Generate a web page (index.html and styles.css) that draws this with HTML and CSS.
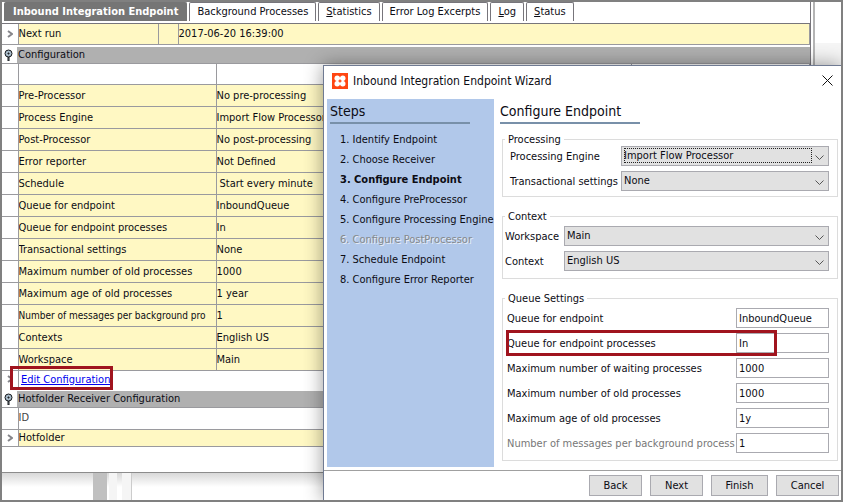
FILE: index.html
```html
<!DOCTYPE html>
<html lang="en">
<head>
<meta charset="utf-8">
<title>Inbound Integration Endpoint</title>
<link rel="stylesheet" href="styles.css">
</head>
<body>
<div class="app">
  <main class="main">
    <div class="tabs" role="tablist">
      <button class="tab tab-active" role="tab">Inbound Integration Endpoint</button>
      <button class="tab" role="tab">Background Processes</button>
      <button class="tab" role="tab"><u>S</u>tatistics</button>
      <button class="tab" role="tab">Error Log Excerpts</button>
      <button class="tab" role="tab"><u>L</u>og</button>
      <button class="tab" role="tab"><u>S</u>tatus</button>
    </div>
    <table class="grid next-run">
      <colgroup><col class="c-gutter"><col class="c-name"><col class="c-gap"><col></colgroup>
      <tr><td class="gutter"><svg class="chev" viewBox="0 0 6 8"><path d="M1 1l4 3-4 3"/></svg></td><td>Next run</td><td></td><td>2017-06-20 16:39:00</td></tr>
    </table>
    <h2 class="section"><svg class="pin" viewBox="0 0 9 12"><path d="M4 8v4h1V8z"/><circle cx="4.500" cy="4.500" r="3.500"/><path d="M4 4h1v1H4z"/></svg><span>Configuration</span></h2>
    <table class="grid config">
      <colgroup><col class="c-gutter"><col class="c-label"><col class="c-value"><col></colgroup>
      <tr class="blank"><td class="gutter"></td><td></td><td></td><td></td></tr>
      <tr><td class="gutter"></td><td>Pre-Processor</td><td>No pre-processing</td><td></td></tr>
      <tr><td class="gutter"></td><td>Process Engine</td><td>Import Flow Processor</td><td></td></tr>
      <tr><td class="gutter"></td><td>Post-Processor</td><td>No post-processing</td><td></td></tr>
      <tr><td class="gutter"></td><td>Error reporter</td><td>Not Defined</td><td></td></tr>
      <tr><td class="gutter"></td><td>Schedule</td><td class="inset">Start every minute</td><td></td></tr>
      <tr><td class="gutter"></td><td>Queue for endpoint</td><td>InboundQueue</td><td></td></tr>
      <tr><td class="gutter"></td><td>Queue for endpoint processes</td><td>In</td><td></td></tr>
      <tr><td class="gutter"></td><td>Transactional settings</td><td>None</td><td></td></tr>
      <tr><td class="gutter"></td><td>Maximum number of old processes</td><td>1000</td><td></td></tr>
      <tr><td class="gutter"></td><td>Maximum age of old processes</td><td>1 year</td><td></td></tr>
      <tr><td class="gutter"></td><td class="tight">Number of messages per background pro</td><td>1</td><td></td></tr>
      <tr><td class="gutter"></td><td>Contexts</td><td>English US</td><td></td></tr>
      <tr><td class="gutter"></td><td>Workspace</td><td>Main</td><td></td></tr>
    </table>
    <div class="edit-row">
      <span class="edit-gutter"><svg class="chev" viewBox="0 0 6 8"><path d="M1 1l4 3-4 3"/></svg></span>
      <a class="edit-link" href="#">Edit Configuration</a>
      <span class="mark mark-edit"></span>
    </div>
    <h2 class="section section-low"><svg class="pin" viewBox="0 0 9 12"><path d="M4 8v4h1V8z"/><circle cx="4.500" cy="4.500" r="3.500"/><path d="M4 4h1v1H4z"/></svg><span>Hotfolder Receiver Configuration</span></h2>
    <table class="grid hotfolder">
      <colgroup><col class="c-gutter"><col></colgroup>
      <tr class="blank"><td class="gutter"></td><td>ID</td></tr>
      <tr class="short"><td class="gutter"><svg class="chev" viewBox="0 0 6 8"><path d="M1 1l4 3-4 3"/></svg></td><td>Hotfolder</td></tr>
    </table>
    <div class="footer-space"></div>
    <div class="behind"><i class="behind-bar"></i><i class="behind-strip"></i><i class="behind-strip behind-edge"></i></div>
  </main>
  <aside class="side"></aside>
</div>

<section class="dialog" role="dialog" aria-labelledby="wizard-title">
  <header class="titlebar">
    <svg class="logo" viewBox="0 0 16 16"><rect width="16" height="16" fill="#ff4612"/><g fill="#fff"><circle cx="5.200" cy="5.200" r="2.700"/><circle cx="10.800" cy="5.200" r="2.700"/><circle cx="5.200" cy="10.800" r="2.700"/><circle cx="10.800" cy="10.800" r="2.700"/><path d="M5 4.500h6v1.500H5zM5 10h6v1.500H5zM4.500 5H6v6H4.500zM10 5h1.500v6H10z"/></g></svg>
    <h1 id="wizard-title">Inbound Integration Endpoint Wizard</h1>
    <button class="close" aria-label="Close"><svg viewBox="0 0 11 11"><path d="M.5.5l10 10M10.500.5l-10 10"/></svg></button>
  </header>
  <div class="dialog-body">
    <nav class="steps">
      <h2 class="heading">Steps</h2>
      <ol>
        <li>1. Identify Endpoint</li>
        <li>2. Choose Receiver</li>
        <li class="current">3. Configure Endpoint</li>
        <li>4. Configure PreProcessor</li>
        <li>5. Configure Processing Engine</li>
        <li class="off">6. Configure PostProcessor</li>
        <li>7. Schedule Endpoint</li>
        <li>8. Configure Error Reporter</li>
      </ol>
    </nav>
    <form class="content">
      <h2 class="heading">Configure Endpoint</h2>
      <fieldset class="group processing">
        <legend>Processing</legend>
        <div class="row">
          <label for="engine">Processing Engine</label>
          <span class="pick focused"><select id="engine"><option>Import Flow Processor</option></select><svg viewBox="0 0 9 5"><path d="M.5.5l4 4 4-4"/></svg></span>
        </div>
        <div class="row">
          <label for="trans">Transactional settings</label>
          <span class="pick"><select id="trans"><option>None</option></select><svg viewBox="0 0 9 5"><path d="M.5.5l4 4 4-4"/></svg></span>
        </div>
      </fieldset>
      <fieldset class="group context">
        <legend>Context</legend>
        <div class="row">
          <label for="workspace">Workspace</label>
          <span class="pick"><select id="workspace"><option>Main</option></select><svg viewBox="0 0 9 5"><path d="M.5.5l4 4 4-4"/></svg></span>
        </div>
        <div class="row">
          <label for="context">Context</label>
          <span class="pick"><select id="context"><option>English US</option></select><svg viewBox="0 0 9 5"><path d="M.5.5l4 4 4-4"/></svg></span>
        </div>
      </fieldset>
      <fieldset class="group queue">
        <legend>Queue Settings</legend>
        <div class="row"><label for="q1">Queue for endpoint</label><input id="q1" type="text" value="InboundQueue"></div>
        <div class="row marked"><label for="q2">Queue for endpoint processes</label><input id="q2" type="text" value="In"><span class="mark mark-queue"></span></div>
        <div class="row"><label for="q3">Maximum number of waiting processes</label><input id="q3" type="text" value="1000"></div>
        <div class="row"><label for="q4">Maximum number of old processes</label><input id="q4" type="text" value="1000"></div>
        <div class="row"><label for="q5">Maximum age of old processes</label><input id="q5" type="text" value="1y"></div>
        <div class="row"><label class="dim" for="q6">Number of messages per background process</label><input id="q6" type="text" value="1"></div>
      </fieldset>
    </form>
  </div>
  <footer class="actions">
    <button>Back</button>
    <button>Next</button>
    <button class="wide">Finish</button>
    <button class="wider">Cancel</button>
  </footer>
</section>
</body>
</html>
```
FILE: styles.css
```css
* { box-sizing: border-box; }

body {
  margin: 0;
  position: relative;
  min-height: 100vh;
  overflow: hidden;
  background: #fff;
  color: #0c0c14;
  font: 11px/16px "DejaVu Sans Condensed", Tahoma, sans-serif;
}

button, input, select { font: inherit; color: inherit; }
h1, h2 { margin: 0; font-weight: normal; }
table { border-collapse: collapse; }

.app {
  display: flex;
  min-height: 100vh;
  border: 2px solid #808080;
}

.main {
  flex: 1;
  min-width: 0;
  display: flex;
  flex-direction: column;
  border-right: 1px solid #77757b;
}

.side {
  width: 28px;
  border-left: 2px solid #b4b4b4;
  margin-left: 2px;
  background: linear-gradient(#fff 41px, #f5f5f5 41px);
}

/* Tabs */
.tabs {
  display: flex;
  gap: 2px;
  height: 22px;
  padding: 0 2px 2px;
  border-bottom: 1px solid #77757b;
}

.tab {
  padding: 0 7px;
  border: 1px solid #77757b;
  border-bottom: 0;
  border-radius: 2px 2px 0 0;
  background: #fff;
  line-height: 18px;
  white-space: nowrap;
}

.tab-active {
  padding: 0 8px;
  border-color: #757575;
  background: #757575;
  color: #fff;
  font-weight: bold;
}

/* Property grids */
.grid {
  width: 100%;
  table-layout: fixed;
}

.grid td {
  height: 22px;
  padding: 0;
  border: 1px solid #9a9a9e;
  border-left-width: 0;
  background: #fff8c3;
  white-space: nowrap;
  overflow: hidden;
}

.grid .gutter { background: #fff; text-align: center; }
.grid .blank td { height: 21px; background: #fff; color: #444; }
.grid .inset { padding-left: 3px; }
.grid .tight { font-size: 10px; }
.grid tr:first-child td { border-top: 0; }
.next-run td { height: 20px; }
.grid .short td { height: 17px; }
.c-gutter { width: 16px; }
.c-name { width: 140px; }
.c-gap { width: 20px; }
.c-label { width: 198px; }
.c-value { width: 415px; }

.chev {
  display: block;
  width: 6px;
  height: 8px;
  margin: 0 auto;
  fill: none;
  stroke: #85858a;
  stroke-width: 2;
}

.section {
  display: flex;
  align-items: center;
  height: 19px;
  padding-top: 2px;
  border-bottom: 1px solid #9a9a9e;
  font-size: 11px;
}

.section span {
  flex: 1;
  padding-left: 1px;
  background: #b0b0b0;
}

.pin {
  width: 9px;
  height: 12px;
  margin: 0 4px 0 2px;
  stroke: #16181c;
  stroke-width: 1;
  fill: #a9bccb;
}

.edit-row {
  position: relative;
  display: flex;
  height: 18px;
}

.edit-gutter {
  width: 17px;
  padding-top: 4px;
  border-right: 1px solid #9a9a9e;
}

.edit-link {
  padding-left: 2px;
  color: #0000f0;
  line-height: 18px;
}

.mark {
  position: absolute;
  border: 3px solid #a0141e;
  pointer-events: none;
}

.mark-edit { left: 8px; top: -5px; width: 103px; height: 24px; }
.mark-queue { left: 1px; top: -3px; right: 52px; bottom: -3px; }

.footer-space {
  height: 26px;
  border-bottom: 1px solid #8c8c8c;
}

.behind {
  flex: 1;
  display: flex;
  background: linear-gradient(#d8d8d8, #fff 14px);
}

.behind-bar { width: 14px; margin: 0 2px 0 91px; background: #c0c0c0; }
.behind-strip { width: 8px; margin-right: 5px; background: #f5f5f5; }
.behind-edge { width: 10px; border-right: 1px solid #ccc; }

/* Wizard dialog */
.dialog {
  position: absolute;
  left: 323px;
  top: 65px;
  right: 2px;
  bottom: 2px;
  display: flex;
  flex-direction: column;
  border: 1px solid #6f7a92;
  border-right: 0;
  border-bottom: 0;
  background: #fff;
  box-shadow: 0 0 18px rgba(0, 0, 0, 0.4);
  clip-path: inset(-20px 0 0 -20px);
}

.titlebar {
  display: flex;
  align-items: center;
  gap: 5px;
  height: 33px;
  padding: 0 8px;
  padding-bottom: 4px;
}

.titlebar h1 { font-size: 12px; }
.logo { width: 16px; height: 16px; }

.close {
  display: flex;
  margin-left: auto;
  padding: 0;
  border: 0;
  background: none;
}

.close svg { width: 11px; height: 11px; fill: none; stroke: #111; }

.dialog-body {
  flex: 1;
  display: flex;
  padding-left: 3px;
}

.steps {
  width: 167px;
  padding: 0 3px;
  margin-bottom: 3px;
  background: #b1c8ea;
}

.heading {
  width: 140px;
  height: 25px;
  border-bottom: 2px solid #7890a9;
  font-size: 14px;
  line-height: 24px;
}

.steps ol {
  margin: 6px 0 0;
  padding: 0 0 0 10px;
  list-style: none;
  line-height: 20px;
  white-space: nowrap;
}

.current { font-weight: bold; }
.off { color: #85888c; text-shadow: 1px 1px #e8eef6; }

.content {
  flex: 1;
  min-width: 0;
  padding: 0 3px 0 6px;
}

.group {
  min-width: 0;
  margin: 13px 0 0 2px;
  padding: 3px 8px 2px 2px;
  border: 1px solid #dcdcdc;
}

.group legend {
  padding: 0 3px;
  line-height: 13px;
}

.row {
  display: flex;
  align-items: center;
  height: 20px;
  margin-bottom: 5px;
  white-space: nowrap;
}

.row label { padding-top: 1px; }
.processing { margin-top: 9px; padding-top: 0; padding-bottom: 0; }
.processing .row { padding-left: 5px; }
.queue .row { padding-left: 2px; }
.processing label { width: 111px; }
.context label { width: 59px; }
.queue label { flex: 1; }

.pick {
  position: relative;
  flex: 1;
  display: flex;
}

.pick select {
  width: 100%;
  height: 20px;
  padding: 0 2px;
  border: 1px solid #aaaab0;
  border-radius: 0;
  background: #e1e1e1;
  appearance: none;
  outline: 0;
}

.pick svg {
  position: absolute;
  right: 5px;
  top: 9px;
  width: 9px;
  height: 5px;
  fill: none;
  stroke: #555;
  pointer-events: none;
}

.focused::after {
  content: "";
  position: absolute;
  inset: 2px 17px 3px 3px;
  border: 1px dotted #222;
  pointer-events: none;
}

.queue input {
  width: 93px;
  height: 20px;
  padding: 0 2px;
  border: 1px solid #aaaab0;
  background: #fff;
}

.marked { position: relative; }
.dim { color: #777; }

.actions {
  display: flex;
  justify-content: flex-end;
  gap: 8px;
  height: 30px;
  padding: 4px 2px 4px 0;
  border-top: 1px solid #a0a0a0;
}

.actions button {
  width: 53px;
  padding: 0;
  border: 1px solid #aaaab0;
  background: #e1e1e1;
}

.actions .wide { width: 57px; }
.actions .wider { width: 63px; }
```
